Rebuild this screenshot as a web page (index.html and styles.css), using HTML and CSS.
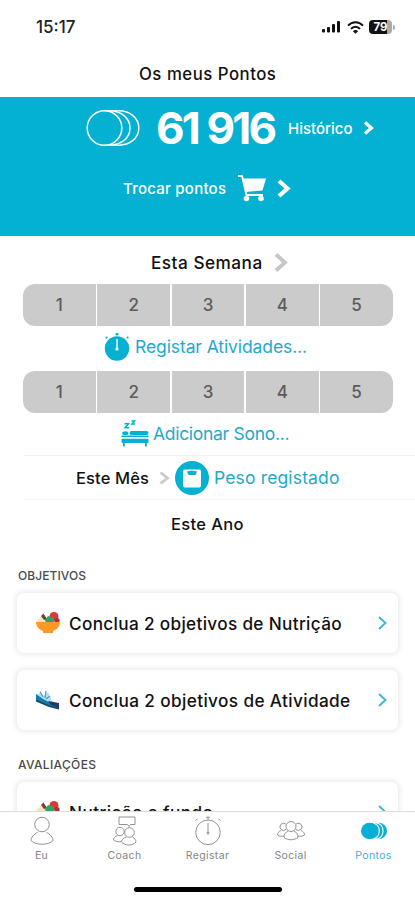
FILE: index.html
```html
<!DOCTYPE html>
<html lang="pt">
<head>
<meta charset="utf-8">
<meta name="viewport" content="width=device-width">
<title>Os meus Pontos</title>
<link rel="stylesheet" href="styles.css">
</head>
<body>
<div class="screen">
  <div class="status">
    <span class="time">15:17</span>
    <svg class="signal" width="19" height="12" viewBox="0 0 19 12"><g fill="#111"><rect x="0" y="8" width="3" height="3.5" rx="1"/><rect x="5" y="6" width="3" height="5.500" rx="1"/><rect x="10" y="3" width="3" height="8.500" rx="1"/><rect x="15" y="0" width="3" height="11.500" rx="1"/></g></svg>
    <svg class="wifi" width="17" height="13" viewBox="0 0 17 13"><g fill="none" stroke="#111" stroke-width="2"><path d="M1 4.700C5.200 0 11.800 0 16 4.700"/><path d="M4 7.900C6.500 5 10.500 5 13 7.900"/></g><path d="M8.500 12.700 5.900 10.200C7.300 8.700 9.700 8.700 11.100 10.200Z" fill="#111"/></svg>
    <span class="battery"><span class="battery-level">79</span><i class="battery-tip"></i></span>
  </div>
  <header class="title"><span>Os meus Pontos</span></header>

  <section class="hero">
    <div class="hero-points">
      <svg width="54" height="38" viewBox="0 0 54 38"><g fill="none" stroke="#fff" stroke-width="1.500"><circle cx="18.500" cy="19" r="17.300"/><path d="M24 1.800C34 2 44 8 44 19S34 36 24 36.200"/><path d="M33 1.800C43 2 52.800 8 52.800 19S43 36 33 36.200"/><path d="M18.500 1.700H33M18.500 36.300H33" stroke-width="1"/></g></svg>
      <span class="points">61 916</span>
      <span class="history">Histórico</span>
      <svg class="chev-history" width="11" height="14" viewBox="0 0 11 14"><path d="M2 1.500 8.500 7 2 12.500" fill="none" stroke="#fff" stroke-width="3.300"/></svg>
    </div>
    <div class="hero-shop">
      <span class="shop">Trocar pontos</span>
      <svg class="cart" width="30" height="28" viewBox="0 0 30 28"><path d="M1 2H5L9.500 21H26" fill="none" stroke="#fff" stroke-width="1.800"/><path d="M5 4.500H29L25.500 16.500 8.500 18Z" fill="#fff"/><circle cx="9.500" cy="24.500" r="2.800" fill="#fff"/><circle cx="24" cy="24.500" r="2.800" fill="#fff"/></svg>
      <svg class="chev-shop" width="14" height="19" viewBox="0 0 14 19"><path d="M2 2 10.500 9.500 2 17" fill="none" stroke="#fff" stroke-width="4.200"/></svg>
    </div>
  </section>

  <main class="content">
    <div class="row week"><span class="period">Esta Semana</span>
      <svg width="15" height="19" viewBox="0 0 15 19"><path d="M2 1.500 11 9.500 2 17.500" fill="none" stroke="#c6c6c6" stroke-width="3.800"/></svg></div>
    <div class="steps"><span>1</span><span>2</span><span>3</span><span>4</span><span>5</span></div>
    <div class="row activities">
      <svg width="26" height="28" viewBox="0 0 26 28"><g fill="#05b1d3"><circle cx="13" cy="15.500" r="12.200"/><rect x="11.500" y="0" width="3" height="2.400" rx="1"/><circle cx="2.500" cy="4.500" r="1.100"/><circle cx="23.500" cy="4.500" r="1.100"/></g><path d="M13 6V16" stroke="#d9f5fa" stroke-width="1.600"/><circle cx="13" cy="16" r="1.700" fill="#d9f5fa"/></svg>
      <span class="link">Registar Atividades...</span></div>
    <div class="steps"><span>1</span><span>2</span><span>3</span><span>4</span><span>5</span></div>
    <div class="row sleep">
      <svg width="28" height="27" viewBox="0 0 28 27"><g fill="none" stroke="#05b1d3" stroke-width="1.500"><path d="M3.500 3.700H7.500L4 7.800H8.200"/><path d="M10.500 1H13.500L11 4H14"/></g><g fill="#05b1d3"><rect x="8.500" y="11" width="19" height="4" rx="2"/><ellipse cx="4.300" cy="13.200" rx="3.100" ry="1.900"/><rect x="0.500" y="15.500" width="27" height="1.500"/><rect x="0.500" y="18.700" width="27" height="4.300" rx="1"/><rect x="2" y="22" width="1.800" height="4.500"/><rect x="24" y="22" width="1.800" height="4.500"/></g></svg>
      <span class="link">Adicionar Sono...</span></div>
    <div class="row month"><span class="period">Este Mês</span>
      <svg class="chev-month" width="12" height="14" viewBox="0 0 12 14"><path d="M1.500 1.500 8.500 7 1.500 12.500" fill="none" stroke="#c9c9c9" stroke-width="2.800"/></svg>
      <svg class="scale" width="34" height="34" viewBox="0 0 34 34"><circle cx="17" cy="17" r="17" fill="#05b1d3"/><rect x="8" y="8.500" width="18" height="18" rx="1.800" fill="#fff"/><path d="M12 10.500C14.500 9.500 19.500 9.500 22 10.500L20.500 14H13.500Z" fill="#05b1d3"/></svg>
      <span class="link">Peso registado</span></div>
    <div class="row year"><span class="period">Este Ano</span></div>

    <h2 class="heading goals">OBJETIVOS</h2>
    <div class="card">
      <svg class="emoji" viewBox="0 0 24 22"><path d="M0 10 6 3 13 10Z" fill="#fbe3c0"/><path d="M5 4 7.500 1.500 11 7 8 8Z" fill="#74402f"/><circle cx="18" cy="4.500" r="4.500" fill="#d83b35"/><circle cx="21" cy="8.500" r="2.600" fill="#a93232"/><path d="M9 8 12 4 18 6 18 11H10Z" fill="#28a766"/><path d="M0 10H24C24 15 20 18 17 19V21H7V19C4 18 0 15 0 10Z" fill="#fb9827"/></svg>
      <span class="card-text nutrition">Conclua 2 objetivos de Nutrição</span>
      <svg class="chev" viewBox="0 0 9 14"><path d="M1 1 7.500 7 1 13"/></svg>
    </div>
    <div class="card">
      <svg class="emoji" viewBox="0 0 24 22"><path d="M1 6 4 4 8 7 12 3 16 12 23 15 23 19 1 10Z" fill="#b4ddf1"/><path d="M4 2.500 7 8M10 2 9 9M14 7 10 10" stroke="#4a9fca" stroke-width="1.300"/><path d="M0 5 7 10 13 13 23 15V20L14 17 0 11Z" fill="#127ba8"/><path d="M12 12 23 14V19L15 16Z" fill="#243b66"/><path d="M0 10.500 14 16.500 23 19V20.500L13 18 0 12.500Z" fill="#174663"/></svg>
      <span class="card-text activity">Conclua 2 objetivos de Atividade</span>
      <svg class="chev" viewBox="0 0 9 14"><path d="M1 1 7.500 7 1 13"/></svg>
    </div>
    <h2 class="heading reviews">AVALIAÇÕES</h2>
    <div class="card">
      <svg class="emoji" viewBox="0 0 24 22"><path d="M0 10 6 3 13 10Z" fill="#fbe3c0"/><path d="M5 4 7.500 1.500 11 7 8 8Z" fill="#74402f"/><circle cx="18" cy="4.500" r="4.500" fill="#d83b35"/><circle cx="21" cy="8.500" r="2.600" fill="#a93232"/><path d="M9 8 12 4 18 6 18 11H10Z" fill="#28a766"/><path d="M0 10H24C24 15 20 18 17 19V21H7V19C4 18 0 15 0 10Z" fill="#fb9827"/></svg>
      <span class="card-text depth">Nutrição a fundo</span>
      <svg class="chev" viewBox="0 0 9 14"><path d="M1 1 7.500 7 1 13"/></svg>
    </div>
  </main>

  <nav class="tabs">
    <div class="tab"><svg width="30" height="32" viewBox="0 0 30 32"><circle cx="15" cy="9.500" r="7.300"/><path d="M10.500 17.500C7 19 4 22.500 4 25.500 8 30.500 22 30.500 26 25.500 26 22.500 23 19 19.500 17.500"/></svg><span>Eu</span></div>
    <div class="tab"><svg width="30" height="32" viewBox="0 0 30 32"><path d="M9 2H25V9.500H20.500L19 11.500 17.500 9.500H9Z"/><circle cx="10" cy="16.500" r="4.200"/><circle cx="19.500" cy="17.500" r="4.800"/><path d="M7.500 20.500C5 21.500 3.500 23 3.500 25 5.500 26.500 8 27 11 26.800"/><path d="M16.500 22C13 23 11.500 25 11.500 27 15 31 23 31 26 27 26 25 24.500 23 22.500 22"/></svg><span>Coach</span></div>
    <div class="tab"><svg width="30" height="32" viewBox="0 0 30 32"><circle cx="15" cy="17.300" r="12.300"/><path d="M15 2V5M13 2.200H17M15 8V18M2.500 5.500 4.500 4M25.500 4 27.500 5.500"/><circle cx="15" cy="18" r="1"/></svg><span>Registar</span></div>
    <div class="tab"><svg width="30" height="32" viewBox="0 0 30 32"><circle cx="15" cy="11.500" r="5"/><path d="M12 16C9.500 17 8 19.500 8 22.500 12 25.500 18 25.500 22 22.500 22 19.500 20.500 17 18 16"/><path d="M10 14.500A3.600 3.600 0 1 1 9.800 9M20 14.500A3.600 3.600 0 1 0 20.200 9M5 15.500C2.500 16.500 1.500 18 1.500 20 3.500 21.500 5.500 21.500 8 21M25 15.500C27.500 16.500 28.500 18 28.500 20 26.500 21.500 24.500 21.500 22 21"/></svg><span>Social</span></div>
    <div class="tab active"><svg width="30" height="32" viewBox="0 0 30 32"><ellipse cx="19.500" cy="16" rx="8.500" ry="8.300" fill="#05b1d3" stroke="none"/><path d="M17 7.700C21.500 8.500 24 12 24 16S21.500 23.500 17 24.300" stroke="#fff" stroke-width="1.100"/><path d="M13 7.700C18 8.500 20.300 12 20.300 16S18 23.500 13 24.300" fill="#05b1d3" stroke="#fff" stroke-width="1.100"/><ellipse cx="10.500" cy="16" rx="8.500" ry="8.300" fill="#05b1d3" stroke="none"/></svg><span>Pontos</span></div>
  </nav>
  <footer class="home"><i class="home-bar"></i></footer>
</div>
</body>
</html>
```
FILE: styles.css
```css
* { box-sizing: border-box; }

body {
  margin: 0;
  background: #fff;
  font-family: Inter, "Liberation Sans", sans-serif;
  font-weight: 500;
  color: #111;
}

svg { display: block; flex: none; }

.screen {
  display: flex;
  flex-direction: column;
  width: 415px;
  height: 900px;
  overflow: hidden;
  white-space: nowrap;
}

.status {
  display: flex;
  flex: none;
  align-items: center;
  height: 54px;
  padding-left: 36px;
}
.time { width: 286px; font-size: 17px; color: #222; }
.wifi { margin-left: 6px; }
.battery { display: flex; align-items: center; gap: 1px; margin-left: 5px; }
.battery-level {
  width: 23px;
  height: 14px;
  border-radius: 4px;
  background: linear-gradient(90deg, #111 78%, #aaa 78%);
  color: #fff;
  font-size: 11.5px;
  font-weight: 700;
  line-height: 14px;
  text-align: center;
}
.battery-tip { width: 2px; height: 5px; border-radius: 0 2px 2px 0; background: #aaa; }

.title {
  flex: none;
  height: 43px;
  padding-left: 139px;
  font-size: 16.8px;
  line-height: 41px;
  letter-spacing: 0.5px;
}

.hero {
  flex: none;
  height: 139px;
  background: #05b1d3;
  color: #fff;
}
.hero-points { display: flex; align-items: center; height: 62px; padding-left: 86px; }
.points {
  width: 132px;
  margin-left: 16px;
  font-size: 44px;
  font-weight: 700;
  letter-spacing: -2.8px;
  word-spacing: 1px;
}
.history { width: 75px; font-size: 15px; }
.hero-shop { display: flex; align-items: center; height: 58px; padding-left: 123px; }
.shop { width: 114px; font-size: 15px; letter-spacing: 0.24px; }
.chev-shop { margin-left: 10px; }

.content { flex: 1; min-height: 0; overflow: hidden; }
.row { display: flex; align-items: center; }
.period { font-size: 16.5px; }
.link { color: #1ea9cc; font-size: 17.5px; font-weight: 400; }

.week { height: 48px; padding: 4px 0 0 151px; letter-spacing: 0.5px; }
.week .period { width: 123px; font-size: 17.2px; }
.steps {
  display: grid;
  grid-template-columns: repeat(5, 1fr);
  gap: 1.5px;
  width: 370px;
  height: 42px;
  margin-left: 23px;
  border-radius: 12px;
  overflow: hidden;
}
.steps span {
  background: #cbcbcb;
  color: #5c5c5c;
  font-size: 17px;
  line-height: 42px;
  text-align: center;
}
.activities { gap: 5px; height: 45px; padding: 0 0 4px 104px; }
.activities .link { letter-spacing: -0.1px; }
.sleep { gap: 4px; height: 42px; padding: 0 0 2px 121px; }
.sleep .link { letter-spacing: -0.29px; }
.month {
  height: 45px;
  margin-left: 24px;
  padding-left: 52px;
  border-top: 1px solid #f1f1f1;
  border-bottom: 1px solid #f4f4f4;
}
.month .period { width: 83px; letter-spacing: 0.14px; }
.scale { margin-left: 4px; }
.month .link { margin-left: 5px; letter-spacing: 0.15px; }
.year { height: 48px; padding-left: 171px; letter-spacing: 0.36px; }

.heading {
  margin: 0 0 0 18px;
  color: #4a4a4a;
  font-size: 12px;
  font-weight: 500;
}
.goals { height: 45px; padding-top: 13px; line-height: 30px; letter-spacing: 0.08px; }
.reviews { height: 35px; line-height: 35px; letter-spacing: 0.34px; }
.card {
  display: flex;
  align-items: center;
  width: 381px;
  height: 60px;
  margin: 0 0 17px 17px;
  padding-left: 19px;
  border-radius: 7px;
  box-shadow: 0 0 5px 2px #ececec;
}
.emoji { width: 24px; height: 22px; }
.card-text { width: 309px; margin-left: 9px; font-size: 17.2px; }
.nutrition { letter-spacing: 0.33px; }
.activity { letter-spacing: 0.38px; }
.depth { letter-spacing: 0.41px; }
.chev { width: 9px; height: 14px; fill: none; stroke: #37b5d6; stroke-width: 1.8; }

.tabs {
  display: grid;
  flex: none;
  grid-template-columns: repeat(5, 83px);
  height: 61px;
  border-top: 1px solid #dcdcdc;
  background: #fff;
}
.tab {
  display: flex;
  flex-direction: column;
  align-items: center;
  padding-top: 3px;
  color: #858585;
  font-size: 10.5px;
  font-weight: 400;
  letter-spacing: 0.35px;
}
.tab svg { fill: none; stroke: #929292; stroke-width: 1; }
.tab span { line-height: 18px; }
.tab.active { color: #37b5d6; }

.home { display: flex; flex: none; justify-content: center; height: 28px; padding-top: 15px; }
.home-bar { width: 148px; height: 5px; border-radius: 3px; background: #000; }
```
